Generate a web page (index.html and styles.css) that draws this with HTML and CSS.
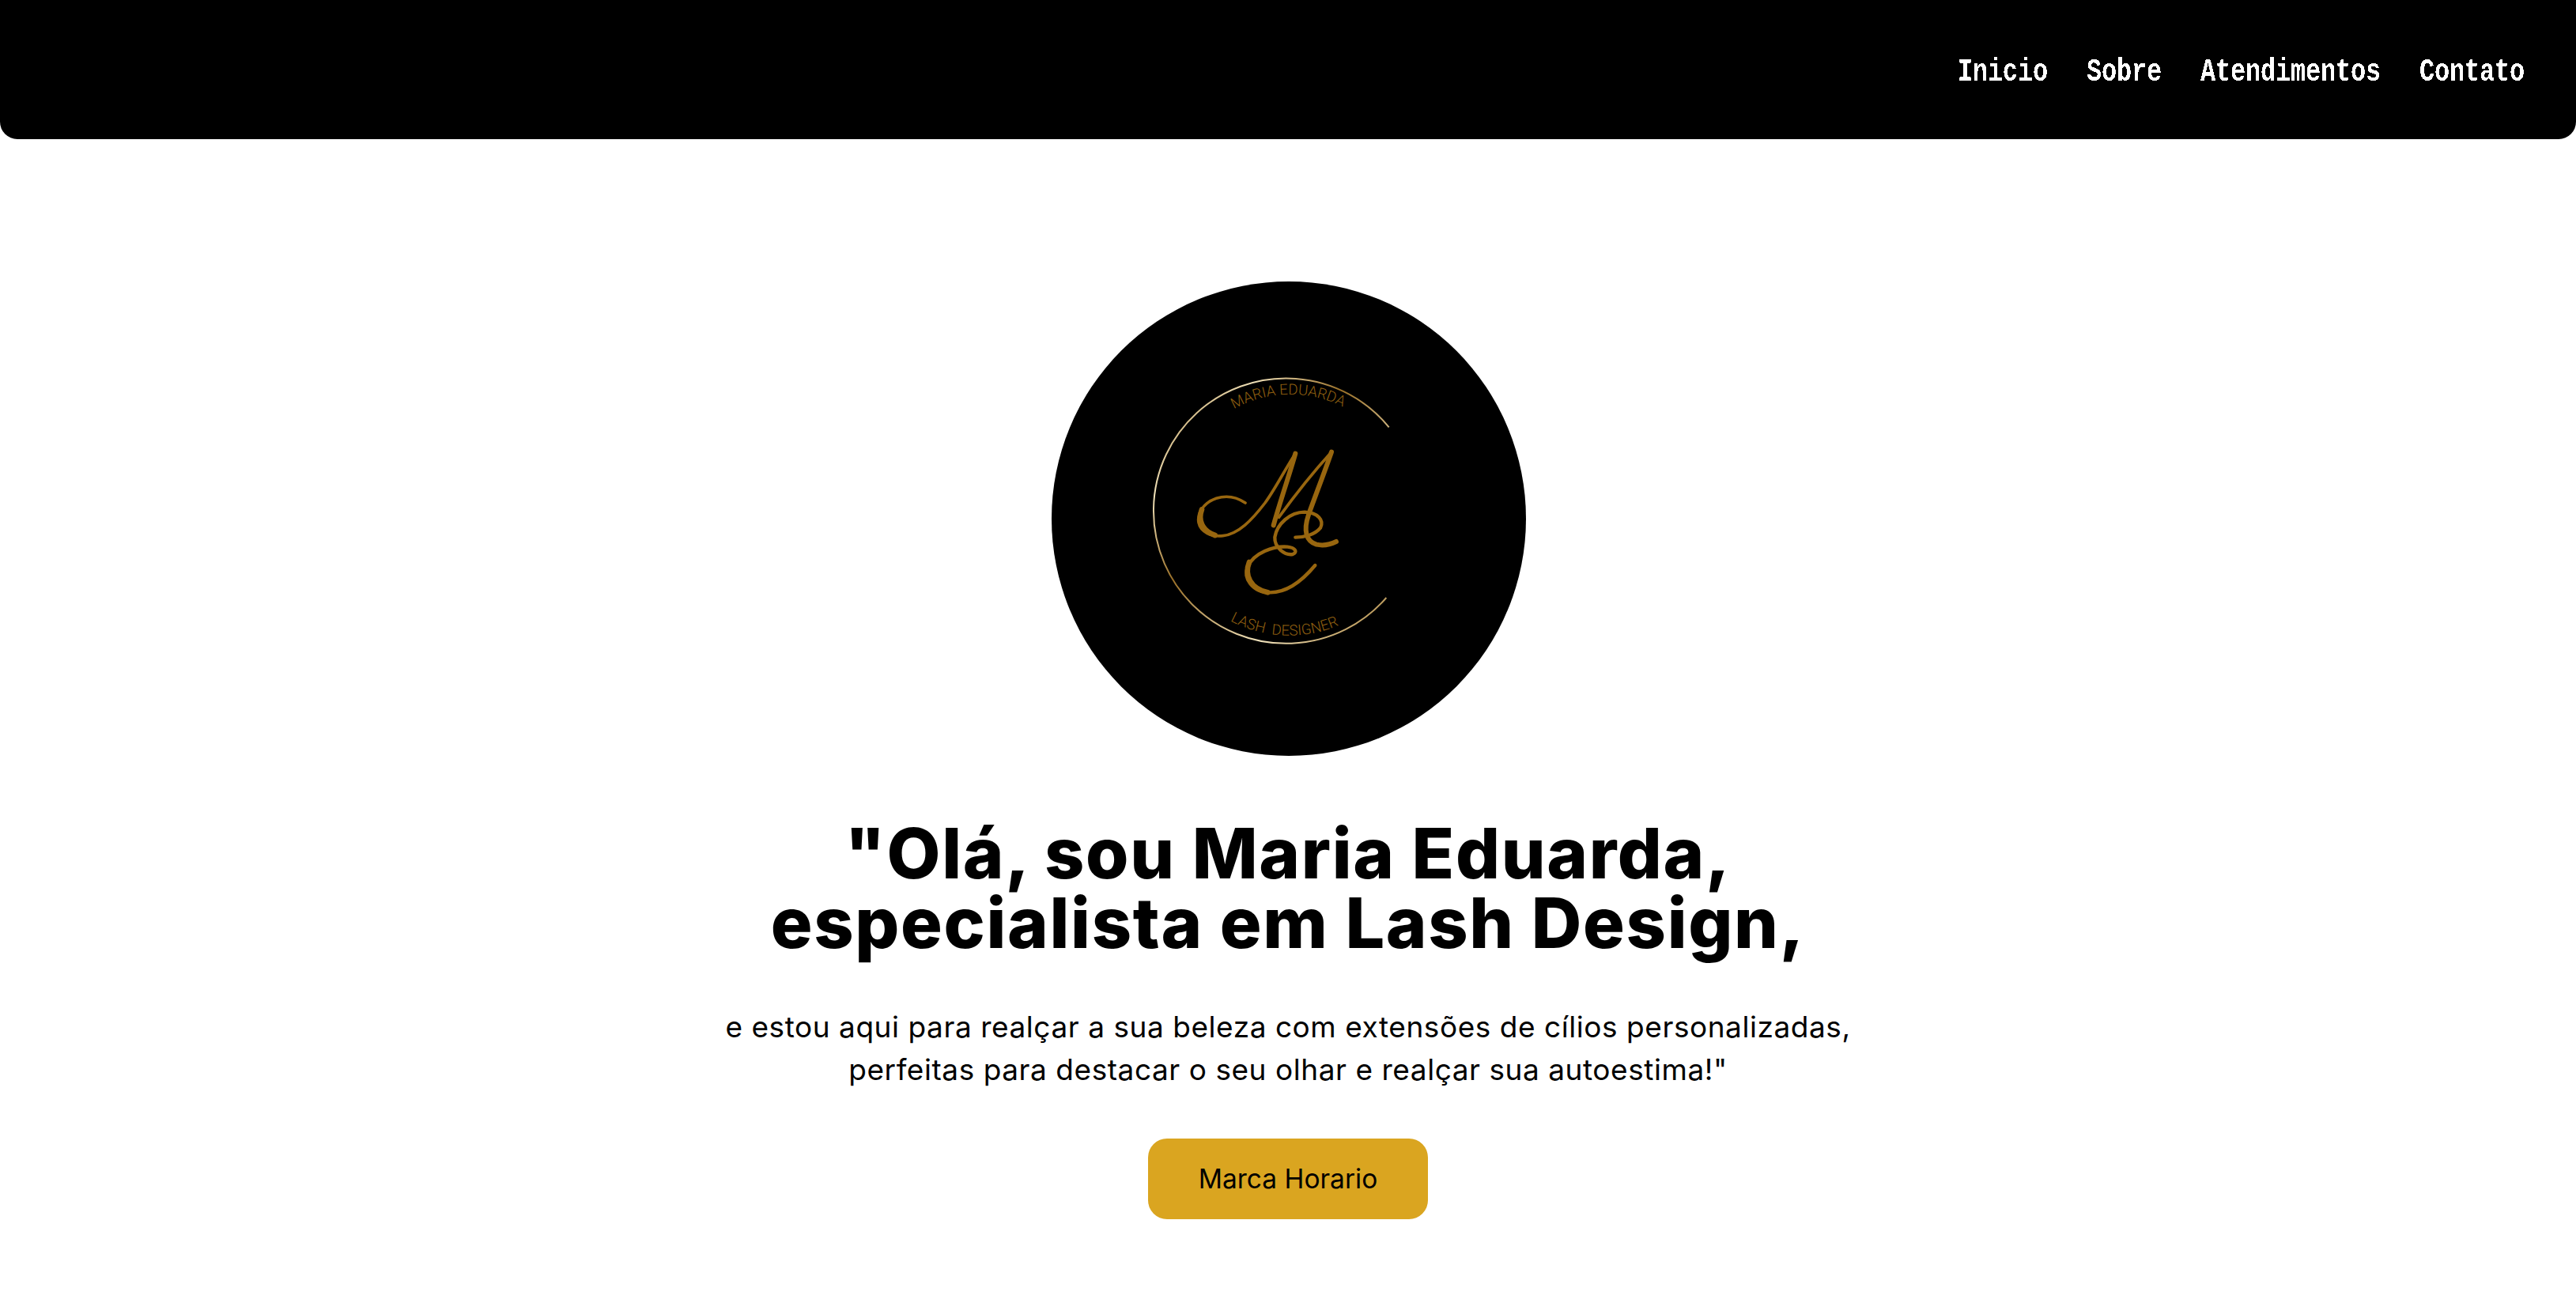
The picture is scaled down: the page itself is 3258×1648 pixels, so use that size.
FILE: index.html
```html
<!DOCTYPE html>
<html lang="pt-BR">
<head>
<meta charset="utf-8">
<title>Maria Eduarda - Lash Designer</title>
<link rel="stylesheet" href="styles.css">
</head>
<body>
<svg class="defs" aria-hidden="true">
  <filter id="crisp" x="0" y="0" width="100%" height="100%" color-interpolation-filters="sRGB">
    <feComponentTransfer>
      <feFuncA type="discrete" tableValues="0 1"/>
    </feComponentTransfer>
  </filter>
</svg>
<header class="topbar">
  <nav class="nav">
    <a class="nav-link" href="#"><span>Inicio</span></a>
    <a class="nav-link" href="#"><span>Sobre</span></a>
    <a class="nav-link" href="#"><span>Atendimentos</span></a>
    <a class="nav-link" href="#"><span>Contato</span></a>
  </nav>
</header>
<main class="hero">
  <svg class="logo" viewBox="0 0 600 600" role="img" aria-label="Logo Maria Eduarda Lash Designer">
    <defs>
      <linearGradient id="ring" x1="0" y1="0" x2="1" y2="1">
        <stop offset="0" stop-color="#9a7028"/>
        <stop offset=".22" stop-color="#efe0b8"/>
        <stop offset=".42" stop-color="#9a7028"/>
        <stop offset=".72" stop-color="#f0e2bc"/>
        <stop offset="1" stop-color="#a67d34"/>
      </linearGradient>
      <path id="arc-top" d="M512 248A437 437 0 0 1 985 238"/>
      <path id="arc-bottom" d="M490 1010A478 478 0 0 0 980 1030"/>
    </defs>
    <circle cx="300" cy="300" r="300" fill="#000"/>
    <g transform="translate(50 85) scale(.33333)">
      <path class="ring" d="M1130 298A503 503 0 1 0 1120 945"/>
      <text class="logo-text"><textPath href="#arc-top" startOffset="50%" text-anchor="middle">MARIA EDUARDA</textPath></text>
      <text class="logo-text"><textPath href="#arc-bottom" startOffset="50%" text-anchor="middle">LASH  DESIGNER</textPath></text>
      <g class="mono">
        <path class="thin" d="M585 585C555 565 515 555 475 568C425 585 402 625 408 660C415 695 455 715 500 710C560 703 610 650 660 585C700 530 740 450 775 398"/>
        <path class="thick" d="M775 398C755 470 720 570 692 670"/>
        <path class="thin" d="M712 640C770 560 850 460 912 392"/>
        <path class="thick" d="M912 392C885 470 850 560 825 630C805 690 815 730 855 743C880 748 910 742 930 732"/>
        <path class="mid" d="M775 716C810 716 850 705 870 680C885 650 860 622 810 620C755 620 705 665 697 715C695 755 735 785 765 780C785 772 775 755 745 752C690 748 620 775 595 825C575 870 610 925 680 925C750 925 810 870 850 822"/>
        <path class="bowl" d="M420 610C405 650 420 690 470 708"/>
        <path class="bowl" d="M600 810C580 860 605 910 670 925"/>
      </g>
    </g>
  </svg>
  <h1 class="title">"Olá, sou Maria Eduarda,<br>especialista em Lash Design,</h1>
  <p class="lead">e estou aqui para realçar a sua beleza com extensões de cílios personalizadas,<br>perfeitas para destacar o seu olhar e realçar sua autoestima!"</p>
  <a class="cta" href="#">Marca Horario</a>
</main>
</body>
</html>
```
FILE: styles.css
```css
* { box-sizing: border-box; }
html, body { margin: 0; padding: 0; background: #fff; color: #000; }
body { font-family: Inter, "Noto Sans", sans-serif; min-height: 1648px; overflow: hidden; }
.defs { display: block; width: 0; height: 0; }

.topbar {
  height: 176px;
  background: #000;
  border-radius: 0 0 22px 22px;
  display: flex;
  justify-content: flex-end;
  padding: 74px 65px 0 0;
}
.nav { display: flex; gap: 49px; align-items: flex-start; }
.nav-link {
  color: #fff;
  text-decoration: none;
  font-family: "Liberation Mono", monospace;
  font-weight: 700;
  font-size: 32px;
  letter-spacing: -0.2px;
  line-height: 36px;
}
.nav-link span { display: inline-block; transform: scaleY(1.28); filter: url(#crisp); }

.hero {
  display: flex;
  flex-direction: column;
  align-items: center;
  padding-top: 180px;
}
.logo { width: 600px; height: 600px; display: block; margin-left: 2px; }
.ring { fill: none; stroke: url(#ring); stroke-width: 6; }
.logo-text { font-family: Roboto, sans-serif; font-weight: 300; font-size: 56px; fill: #8f5f10; white-space: pre; }
.mono path { fill: none; stroke: #98660f; stroke-linecap: round; stroke-linejoin: round; }
.thin { stroke-width: 11; }
.mid { stroke-width: 13; }
.thick { stroke-width: 18; }
.mono .bowl { stroke-width: 20; }

.title {
  margin: 79px 0 0;
  font-size: 88px;
  line-height: 88px;
  font-weight: 800;
  letter-spacing: 1.65px;
  text-align: center;
}
.lead {
  margin: 61px 0 0;
  font-size: 37px;
  line-height: 54px;
  font-weight: 400;
  letter-spacing: 0.55px;
  text-align: center;
}
.cta {
  margin-top: 60px;
  width: 354px;
  height: 102px;
  border-radius: 24px;
  background: #daa520;
  color: #000;
  text-decoration: none;
  font-size: 33.5px;
  display: flex;
  align-items: center;
  justify-content: center;
}
```
